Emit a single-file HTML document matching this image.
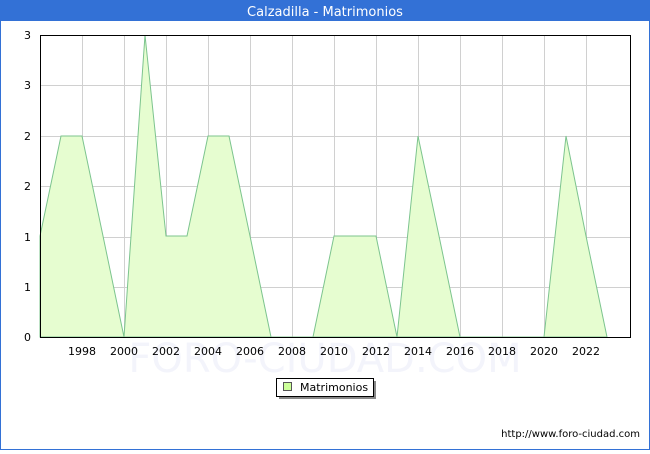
<!DOCTYPE html>
<html><head><meta charset="utf-8"><style>
html,body{margin:0;padding:0;}
body{width:650px;height:450px;overflow:hidden;background:#fff;font-family:"DejaVu Sans","Liberation Sans",sans-serif;}
</style></head><body>
<svg width="650" height="450" xmlns="http://www.w3.org/2000/svg" font-family="DejaVu Sans, Liberation Sans, sans-serif">
<rect x="0.5" y="0.5" width="649" height="449" fill="#fff" stroke="#3371d6"/>
<rect x="0" y="0" width="650" height="21" fill="#3371d6"/>
<text x="325" y="16" fill="#fff" font-size="13" text-anchor="middle">Calzadilla - Matrimonios</text>
<g stroke="#d0d0d0" stroke-width="1">
<line x1="40" y1="85.5" x2="630" y2="85.5"/><line x1="40" y1="136.5" x2="630" y2="136.5"/><line x1="40" y1="186.5" x2="630" y2="186.5"/><line x1="40" y1="237.5" x2="630" y2="237.5"/><line x1="40" y1="287.5" x2="630" y2="287.5"/>
<line x1="82.5" y1="35" x2="82.5" y2="337"/><line x1="124.5" y1="35" x2="124.5" y2="337"/><line x1="166.5" y1="35" x2="166.5" y2="337"/><line x1="208.5" y1="35" x2="208.5" y2="337"/><line x1="250.5" y1="35" x2="250.5" y2="337"/><line x1="292.5" y1="35" x2="292.5" y2="337"/><line x1="334.5" y1="35" x2="334.5" y2="337"/><line x1="376.5" y1="35" x2="376.5" y2="337"/><line x1="418.5" y1="35" x2="418.5" y2="337"/><line x1="460.5" y1="35" x2="460.5" y2="337"/><line x1="502.5" y1="35" x2="502.5" y2="337"/><line x1="544.5" y1="35" x2="544.5" y2="337"/><line x1="586.5" y1="35" x2="586.5" y2="337"/>
</g>
<text x="325" y="372" fill="#f3f4fb" font-size="40" text-anchor="middle">FORO-CIUDAD.COM</text>
<polygon fill="#e6fdd0" stroke="#7cc48e" stroke-width="1" points="40,337 40,236 61,136 82,136 103,236 124,337 145,35 166,236 187,236 208,136 229,136 250,236 271,337 313,337 334,236 355,236 376,236 397,337 418,136 439,236 460,337 544,337 566,136 586,236 607,337"/>
<rect x="40.5" y="35.5" width="590" height="302" fill="none" stroke="#000"/>
<g font-size="11" fill="#000" text-anchor="end">
<text x="31" y="39">3</text><text x="31" y="89">3</text><text x="31" y="140">2</text><text x="31" y="190">2</text><text x="31" y="241">1</text><text x="31" y="291">1</text><text x="31" y="341">0</text>
</g>
<g font-size="11" fill="#000" text-anchor="middle">
<text x="82" y="355">1998</text><text x="124" y="355">2000</text><text x="166" y="355">2002</text><text x="208" y="355">2004</text><text x="250" y="355">2006</text><text x="292" y="355">2008</text><text x="334" y="355">2010</text><text x="376" y="355">2012</text><text x="418" y="355">2014</text><text x="460" y="355">2016</text><text x="502" y="355">2018</text><text x="544" y="355">2020</text><text x="586" y="355">2022</text>
</g>
<rect x="279" y="381" width="97" height="18" fill="#888"/>
<rect x="276.5" y="378.5" width="97" height="18" fill="#fff" stroke="#000"/>
<rect x="283.5" y="382.5" width="8" height="8" fill="#ccff99" stroke="#555"/>
<text x="300" y="391" font-size="11" fill="#000">Matrimonios</text>
<text x="640" y="437" font-size="10" fill="#000" text-anchor="end">http://www.foro-ciudad.com</text>
</svg>
</body></html>
